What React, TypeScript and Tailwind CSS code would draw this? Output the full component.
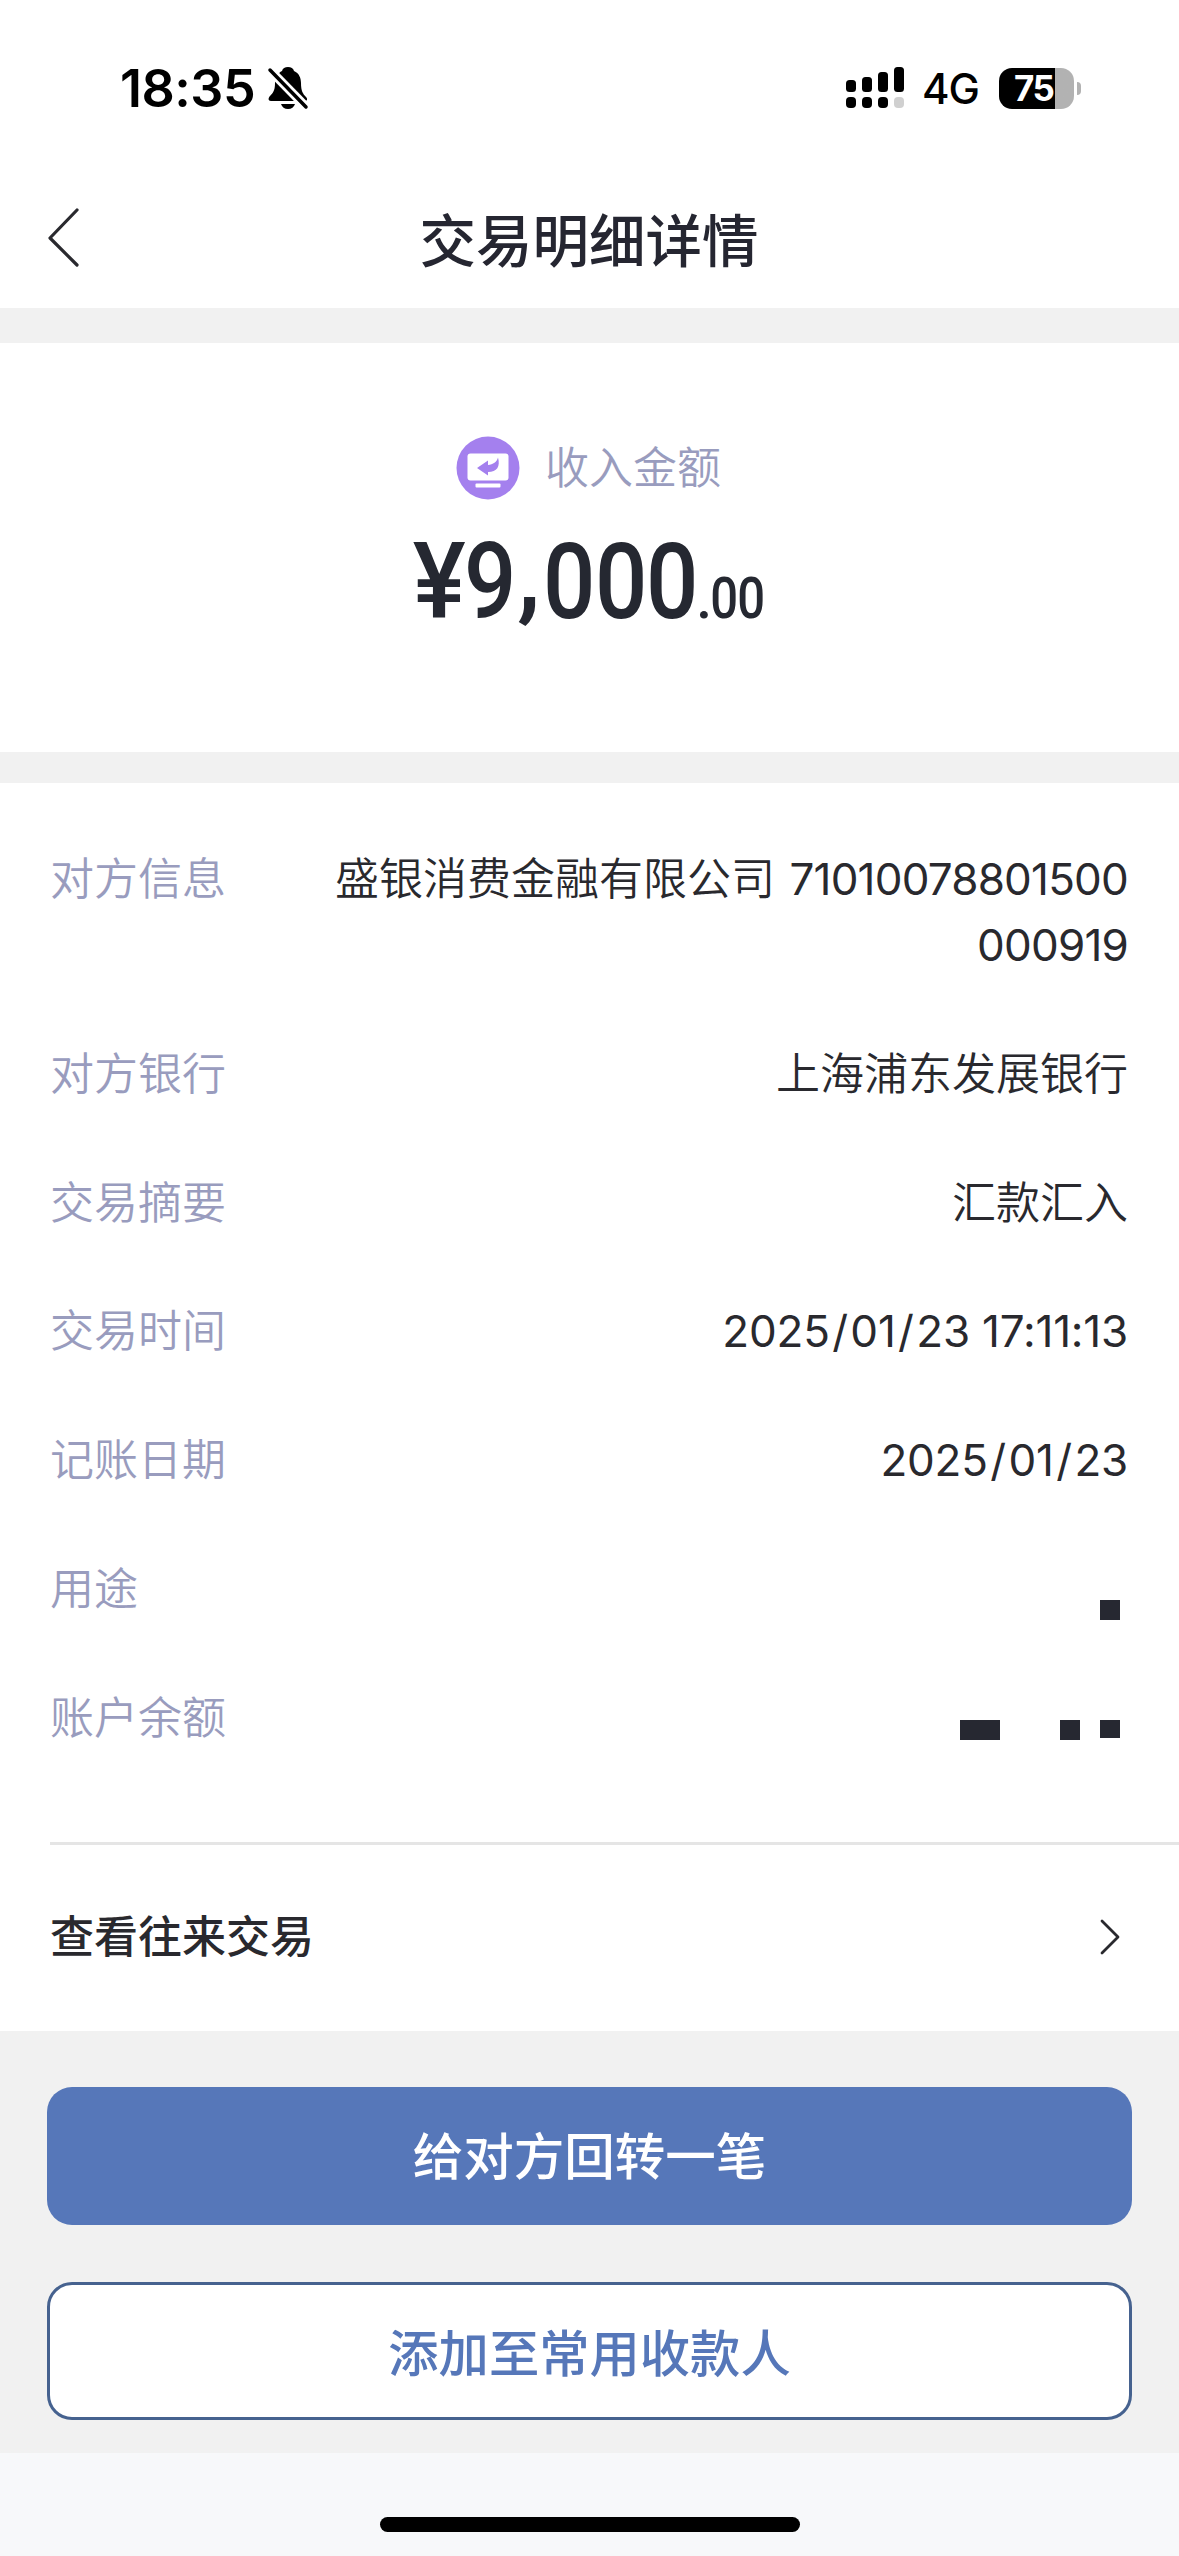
import type { ReactNode } from 'react';

type Block = { width: number; height: number; left: number };

function StatusBar() {
  return (
    <div className="flex h-[177px] shrink-0 items-start justify-between pt-[60px] pr-[98px] pl-[120px] text-black">
      <div className="flex h-[56px] items-center">
        <span className="w-[144px] pt-[1px] text-[52px] leading-none font-semibold tracking-[-0.5px] whitespace-nowrap">18:35</span>
        <svg className="ml-[3px] h-[44px] w-[42px]" viewBox="0 0 42 44">
          <path d="M21 1c3 0 5.500 1.500 6 4 5 2 7 7 7 12 0 8 2 11 5 14 2 2 1 4-1 4H4c-3 0-3-3-1-5 4-4 5-7 5-13 0-6 3-10 7-12 .5-2.500 3-4 6-4Z" />
          <path d="M14 38h14c-1 3-3.500 5-7 5s-6-2-7-5Z" />
          <path d="M1 2l39 40" stroke="white" strokeWidth="9" />
          <path d="M3 4l36 37" stroke="black" strokeWidth="3.500" strokeLinecap="round" />
        </svg>
      </div>
      <div className="flex h-[56px] items-center">
        <svg className="h-[42px] w-[58px]" viewBox="0 0 58 42">
          <rect x="0" y="13" width="10" height="12" rx="3.500" />
          <rect x="16" y="10" width="10" height="15" rx="3.500" />
          <rect x="32" y="5" width="10" height="20" rx="3.500" />
          <rect x="48" y="0" width="10" height="25" rx="3.500" />
          <rect x="0" y="30" width="10" height="11" rx="4" />
          <rect x="16" y="30" width="10" height="11" rx="4" />
          <rect x="32" y="30" width="10" height="11" rx="4" />
          <rect x="48" y="30" width="10" height="11" rx="4" fill="#d0d0d0" />
        </svg>
        <span className="ml-[18px] w-[77px] pt-[2px] text-[42px] leading-none font-medium tracking-[-1px]">4G</span>
        <div className="flex h-[41px] w-[75px] items-center rounded-[13px] bg-linear-to-r from-black from-[75%] to-[#b2b2b2] to-[75%] pl-[15px] text-[35px] leading-none font-bold tracking-[-1.500px] text-white">
          75
        </div>
        <div className="ml-[3px] h-[13px] w-[4px] rounded-r-full bg-[#b2b2b2]" />
      </div>
    </div>
  );
}

function IncomeIcon() {
  return (
    <svg className="h-[64px] w-[64px]" viewBox="0 0 64 64">
      <circle cx="32" cy="32" r="31.500" fill="#a480ee" />
      <rect x="11.500" y="17.500" width="41" height="27" rx="3" fill="white" />
      <rect x="19.500" y="47.500" width="25" height="4" rx="1" fill="white" />
      <path d="M21 32l11-7.500v4.500c5-.5 9-3 10-7.500 2.500 9-1 14.500-10 14.500v3.500Z" fill="#a480ee" />
    </svg>
  );
}

function Amount() {
  return (
    <div className="flex h-[78px] items-end justify-center pr-[3px] font-[Roboto] font-medium text-[#252831]">
      <div className="flex text-[106px] leading-[73px] whitespace-nowrap">
        <span className="flex w-[54px] justify-center"><span className="scale-x-[0.94]">¥</span></span>
        <span className="flex w-[48px] justify-center"><span className="scale-x-[0.87]">9</span></span>
        <span className="flex w-[30px] -translate-y-[9px] justify-center">,</span>
        <span className="flex w-[51.500px] justify-center"><span className="scale-x-[0.87]">0</span></span>
        <span className="flex w-[51.500px] justify-center"><span className="scale-x-[0.87]">0</span></span>
        <span className="flex w-[51.500px] justify-center"><span className="scale-x-[0.87]">0</span></span>
      </div>
      <div className="flex text-[57px] leading-[41px]">
        <span className="flex w-[12px] justify-center">.</span>
        <span className="flex w-[27px] justify-center"><span className="scale-x-[0.86]">0</span></span>
        <span className="flex w-[27px] justify-center"><span className="scale-x-[0.86]">0</span></span>
      </div>
    </div>
  );
}

function Row({ label, children }: { label: string; children?: ReactNode }) {
  return (
    <div className="flex items-start justify-between">
      <span className="shrink-0 text-[#999cbe]">{label}</span>
      <div className="text-right text-[#29292e]">{children}</div>
    </div>
  );
}

function DateText({ value }: { value: string }) {
  return (
    <span className="font-normal tracking-[-0.200px]">
      {value.split('/').map((part, index) => (
        <span key={index}>
          {index > 0 && <span className="mx-[2.500px]">/</span>}
          {part}
        </span>
      ))}
    </span>
  );
}

function Mosaic({ blocks }: { blocks: Block[] }) {
  return (
    <div className="flex">
      {blocks.map((block, index) => (
        <div key={index} className="bg-[#262831]" style={{ width: block.width, height: block.height, marginLeft: block.left }} />
      ))}
    </div>
  );
}

export default function App() {
  return (
    <div className="flex h-[2556px] w-[1179px] flex-col overflow-hidden bg-[#f1f1f1] font-[Inter,'Noto_Sans_CJK_SC',sans-serif]">
      <div className="flex h-[308px] shrink-0 flex-col bg-white">
        <StatusBar />
        <div className="flex h-[128px] items-center pl-[46px]">
          <svg className="mb-[6px] h-[60px] w-[36px]" viewBox="0 0 36 60" fill="none" stroke="#29292e" strokeWidth="3.200" strokeLinecap="round" strokeLinejoin="round">
            <path d="M31 2L4 30L31 57" />
          </svg>
          <h1 className="mr-[83px] flex-1 pt-[2px] text-center text-[56.500px] leading-none font-medium text-[#252631]">交易明细详情</h1>
        </div>
      </div>

      <section className="mt-[35px] flex h-[409px] shrink-0 flex-col bg-white pt-[93px]">
        <div className="flex items-center justify-center gap-[25px] pr-[2px]">
          <IncomeIcon />
          <span className="text-[44px] leading-[62px] font-[350] text-[#999cbe]">收入金额</span>
        </div>
        <div className="mt-[41px]">
          <Amount />
        </div>
      </section>

      <section className="mt-[31px] h-[1248px] shrink-0 bg-white">
        <div className="flex h-[1059px] flex-col gap-[62.800px] pt-[63px] pr-[51px] pl-[50px] text-[44px] leading-[66px] font-[350]">
          <Row label="对方信息">
            盛银消费金融有限公司 <span className="ml-[2px] font-normal tracking-[-0.800px]">71010078801500</span>
            <br />
            <span className="font-normal tracking-[-0.800px]">000919</span>
          </Row>
          <Row label="对方银行">上海浦东发展银行</Row>
          <Row label="交易摘要">汇款汇入</Row>
          <Row label="交易时间">
            <DateText value="2025/01/23 17:11:13" />
          </Row>
          <Row label="记账日期">
            <DateText value="2025/01/23" />
          </Row>
          <Row label="用途">
            <div className="pt-[44px] pr-[8px]">
              <Mosaic blocks={[{ width: 20, height: 20, left: 0 }]} />
            </div>
          </Row>
          <Row label="账户余额">
            <div className="pt-[35px] pr-[8px]">
              <Mosaic
                blocks={[
                  { width: 40, height: 20, left: 0 },
                  { width: 20, height: 20, left: 60 },
                  { width: 20, height: 18, left: 20 },
                ]}
              />
            </div>
          </Row>
        </div>
        <div className="ml-[50px] h-[3px] bg-[#e5e5e5]" />
        <div className="flex h-[183px] items-center justify-between pr-[58px] pl-[50px]">
          <span className="text-[44px] leading-none font-medium text-[#29292e]">查看往来交易</span>
          <svg className="h-[36px] w-[22px]" viewBox="0 0 22 36" fill="none" stroke="#29292e" strokeWidth="2.800" strokeLinecap="round" strokeLinejoin="round">
            <path d="M3 2L19 18L3 34" />
          </svg>
        </div>
      </section>

      <div className="flex h-[422px] shrink-0 flex-col gap-[57px] px-[47px] pt-[56px]">
        <button className="h-[138px] rounded-[25px] bg-[#5677b9] pt-[2px] text-[50.500px] leading-none font-medium text-white">给对方回转一笔</button>
        <button className="h-[138px] rounded-[25px] border-[3px] border-[#46628f] bg-white pt-[7px] text-[50.300px] leading-none font-medium text-[#5677b9]">添加至常用收款人</button>
      </div>
      <div className="flex flex-1 justify-center bg-[#f7f8fa] pt-[64px]">
        <div className="h-[15px] w-[420px] rounded-full bg-black" />
      </div>
    </div>
  );
}
